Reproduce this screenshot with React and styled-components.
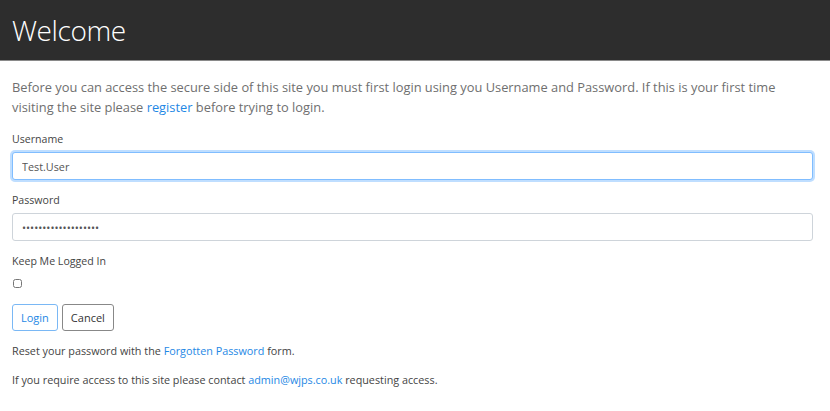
import React from "react";
import styled, { createGlobalStyle } from "styled-components";

const GlobalStyle = createGlobalStyle`
  body {
    margin: 0;
    background: #fff;
    font-family: "Open Sans", "Noto Sans", sans-serif;
    color: #333;
  }
`;

const Header = styled.header`
  background: #2d2d2d;
  height: 60px;
  border-bottom: 1px solid #8a8a8a;
  display: flex;
  align-items: center;
  padding: 0 12px;
`;

const Title = styled.h1`
  margin: 0;
  font-family: "Open Sans", sans-serif;
  font-weight: 300;
  font-size: 28px;
  color: #fff;
  letter-spacing: -0.4px;
`;

const Main = styled.main`
  padding: 16px 17px 0 12px;
`;

const Intro = styled.p`
  margin: 0 0 15px;
  font-size: 12.85px;
  line-height: 20px;
  color: #6f6f6f;
`;

const Link = styled.a`
  color: #1e88e5;
  text-decoration: none;
`;

const Field = styled.div`
  margin-bottom: 13px;
`;

const Label = styled.label`
  display: block;
  font-size: 10.6px;
  line-height: 14px;
  color: #444;
  margin-bottom: 6px;
`;

const Input = styled.input`
  display: block;
  box-sizing: border-box;
  width: 100%;
  height: 28px;
  padding: 0 9px;
  font-family: "Open Sans", sans-serif;
  font-size: 10.8px;
  color: #555;
  border: 1px solid ${(p) => (p.$focus ? "#80bdff" : "#ced4da")};
  border-radius: 3px;
  box-shadow: ${(p) => (p.$focus ? "0 0 0 2px rgba(0,123,255,0.25)" : "none")};
  outline: none;
  background: #fff;
`;

const CheckLabel = styled(Label)`
  margin-bottom: 11px;
`;

const Checkbox = styled.input`
  display: block;
  margin: 0 0 0 1px;
  width: 9px;
  height: 9px;
`;

const Buttons = styled.div`
  display: flex;
  gap: 4px;
  margin: 16px 0 12px;
`;

const Button = styled.button`
  height: 27px;
  padding: 0 8px;
  font-family: "Open Sans", sans-serif;
  font-size: 11px;
  border-radius: 3px;
  background: #fff;
  color: ${(p) => (p.$primary ? "#1e88e5" : "#333")};
  border: 1px solid ${(p) => (p.$primary ? "#7ab8f5" : "#888")};
`;

const Note = styled.p`
  margin: 0 0 14px;
  font-size: 10.8px;
  line-height: 15px;
  color: #444;
`;

export default function App() {
  return (
    <>
      <GlobalStyle />
      <Header>
        <Title>Welcome</Title>
      </Header>
      <Main>
        <Intro>
          Before you can access the secure side of this site you must first
          login using you Username and Password. If this is your first time
          visiting the site please <Link href="#">register</Link> before trying
          to login.
        </Intro>
        <Field>
          <Label>Username</Label>
          <Input $focus defaultValue="Test.User" />
        </Field>
        <Field>
          <Label>Password</Label>
          <Input type="password" defaultValue="abcdefghijklmnopqrs" />
        </Field>
        <CheckLabel>Keep Me Logged In</CheckLabel>
        <Checkbox type="checkbox" />
        <Buttons>
          <Button $primary>Login</Button>
          <Button>Cancel</Button>
        </Buttons>
        <Note>
          Reset your password with the{" "}
          <Link href="#">Forgotten Password</Link> form.
        </Note>
        <Note>
          If you require access to this site please contact{" "}
          <Link href="#">admin@wjps.co.uk</Link> requesting access.
        </Note>
      </Main>
    </>
  );
}
